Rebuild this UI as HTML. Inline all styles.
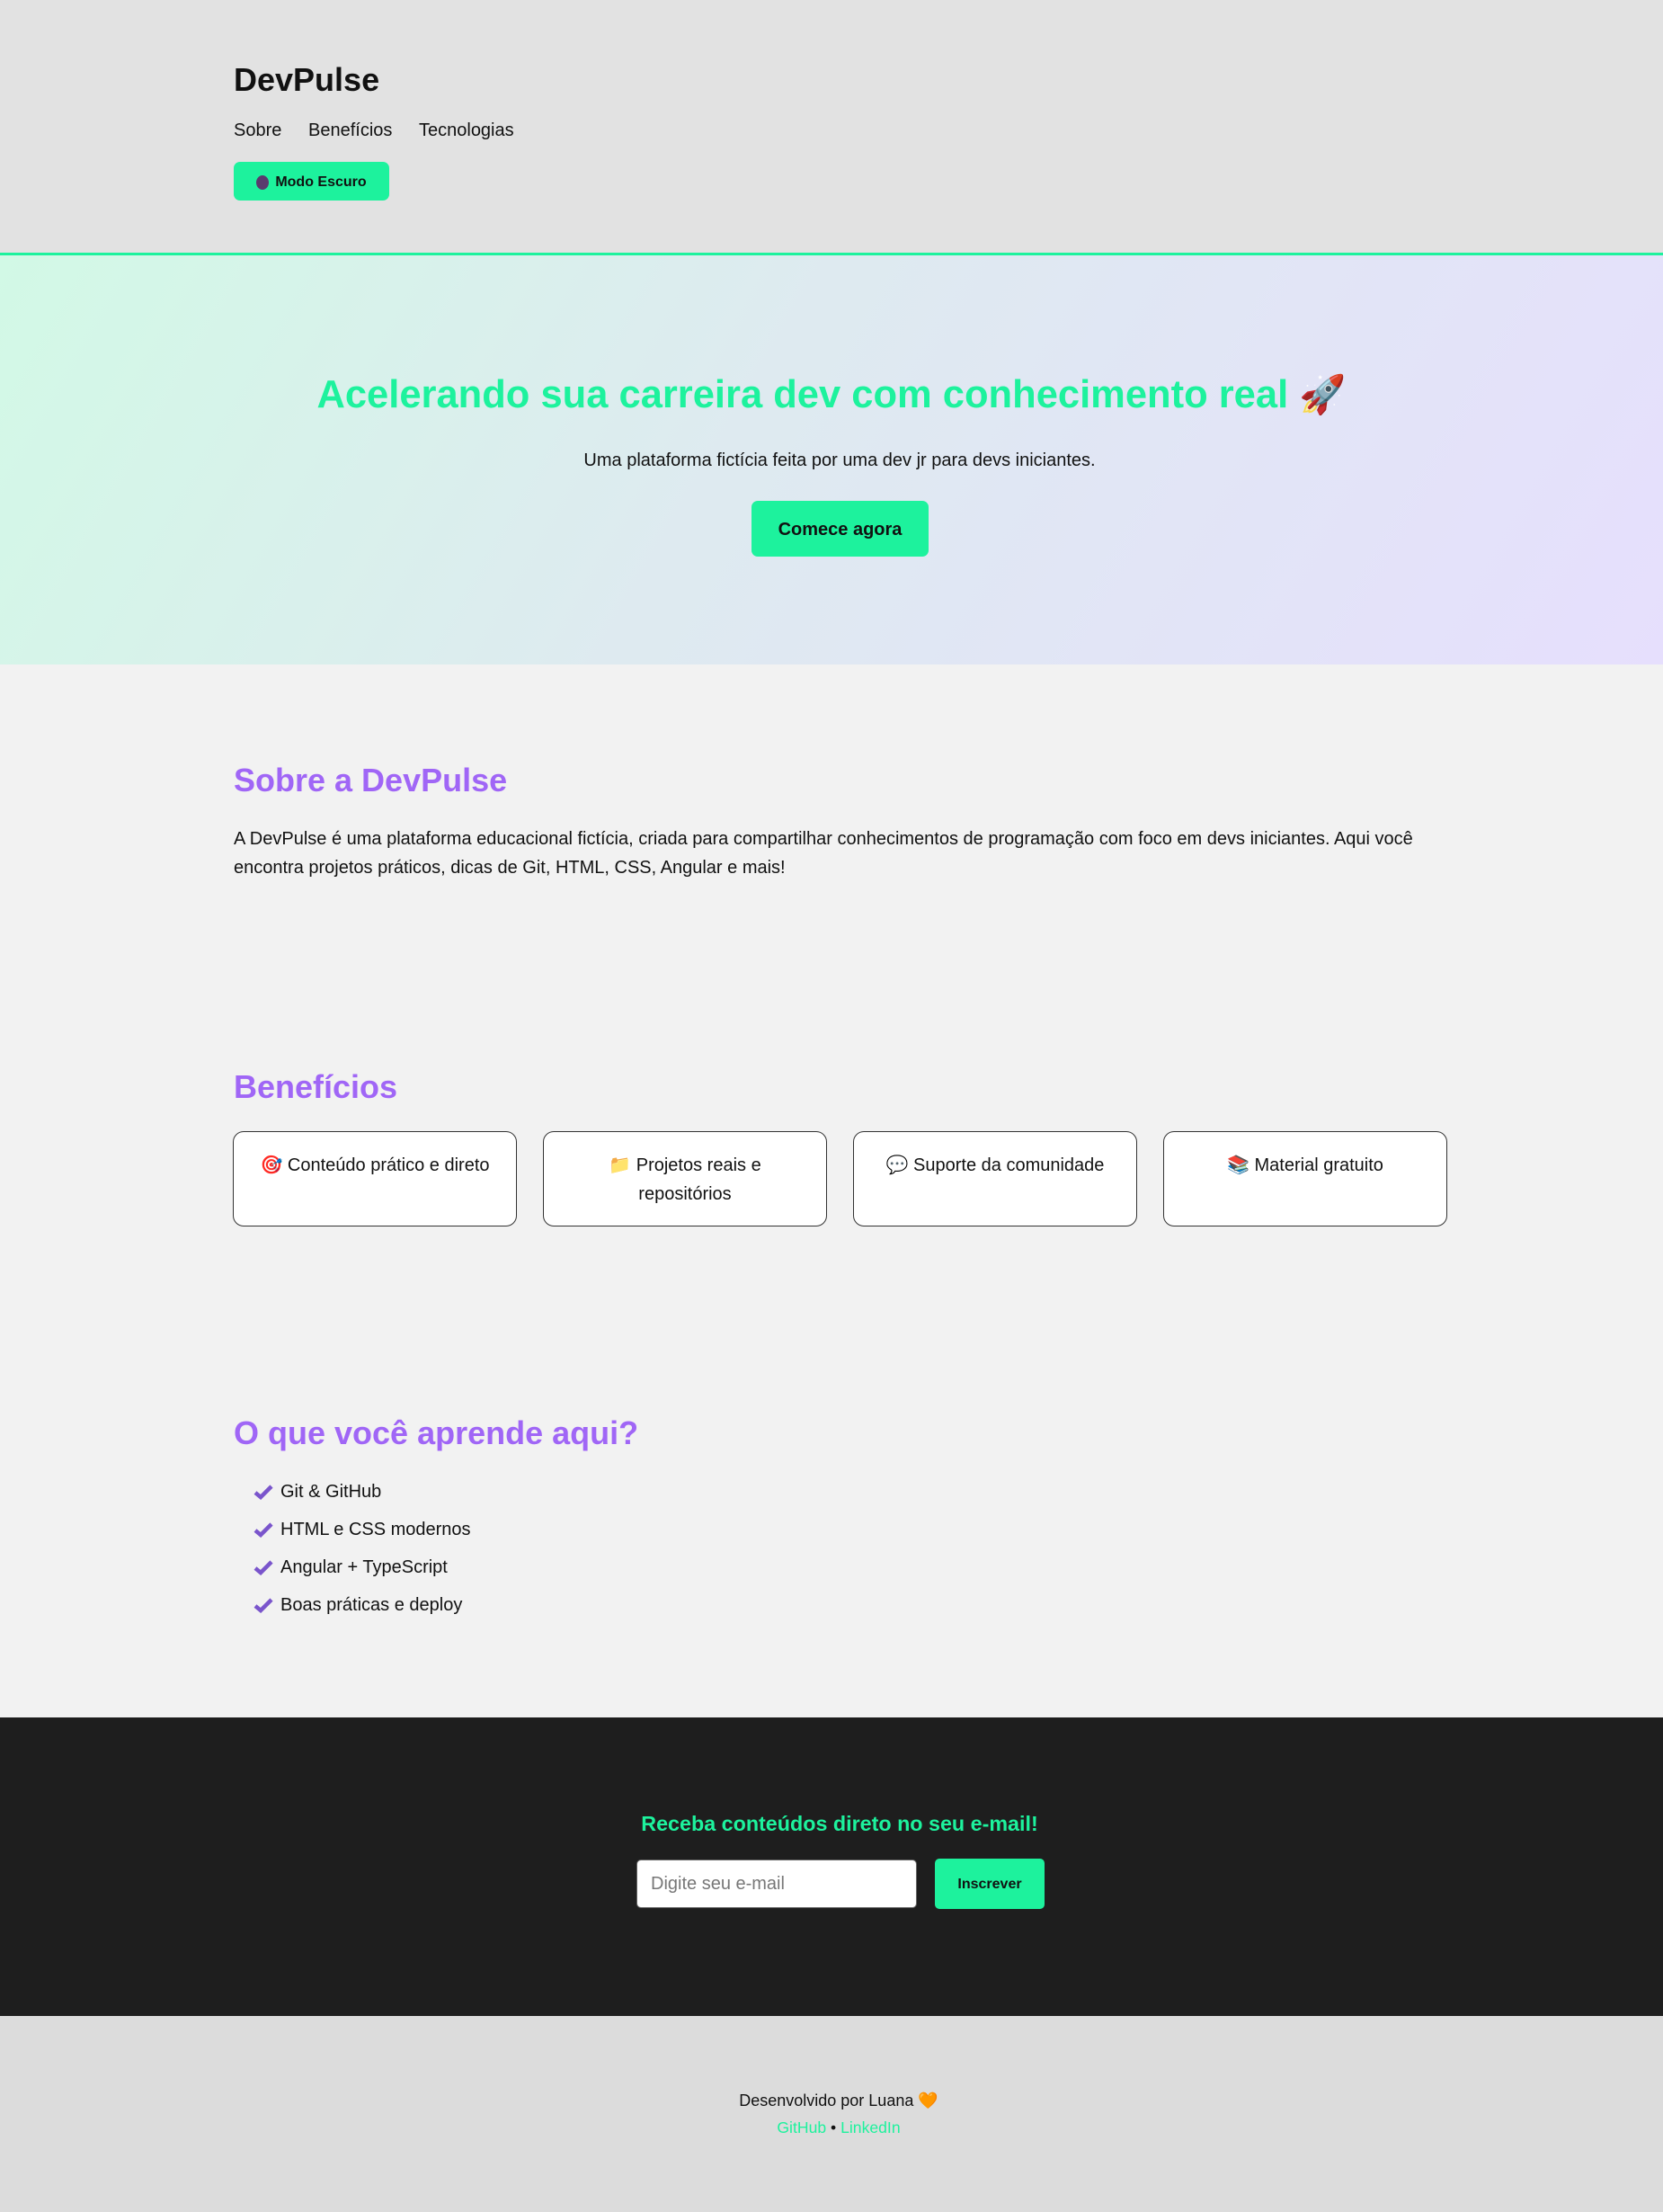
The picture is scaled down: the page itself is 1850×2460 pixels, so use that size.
<!DOCTYPE html>
<html><head><meta charset="utf-8"><style>
*{margin:0;padding:0;box-sizing:border-box}
body{width:1850px;height:2460px;position:relative;font-family:"Liberation Sans",Arial,sans-serif;background:#f2f2f2;color:#111;overflow:hidden}
.a{position:absolute;white-space:nowrap}
header{position:absolute;left:0;top:0;width:1850px;height:284px;background:#e2e2e2;border-bottom:3px solid #1df29d}
.hero{position:absolute;left:0;top:284px;width:1850px;height:455px;background:linear-gradient(120deg,#d2f9e6 0%,#deeaf0 45%,#e6dffd 100%)}
.btn{background:#1df29d;border-radius:7px;font-weight:bold;color:#111;display:flex;align-items:center;justify-content:center}
h2{position:absolute;left:260px;color:#a066f6;font-size:36px;font-weight:bold;white-space:nowrap}
.card{position:absolute;top:1258px;width:316px;height:106px;background:#fff;border:1.5px solid #333;border-radius:12px;text-align:center;font-size:20px;line-height:32px;padding:21px 20px 0}
.li{position:absolute;left:282px;font-size:20px}
.li svg{position:absolute;left:0;top:2px}
.li span{position:absolute;left:30px;top:0px;white-space:nowrap}
.dark{position:absolute;left:0;top:1910px;width:1850px;height:332px;background:#1e1e1e}
.foot{position:absolute;left:0;top:2242px;width:1850px;height:218px;background:#dcdcdc}
</style></head><body>
<header>
<div class="a" style="left:260px;top:68px;font-size:36px;font-weight:bold">DevPulse</div>
<div class="a" style="left:260px;top:134px;font-size:20px">Sobre</div>
<div class="a" style="left:343px;top:134px;font-size:20px">Benefícios</div>
<div class="a" style="left:466px;top:134px;font-size:20px">Tecnologias</div>
<div class="a btn" style="left:260px;top:180px;width:173px;height:43px;font-size:16px;padding-top:2px"><span style="display:inline-block;width:14px;height:16px;border-radius:50%;background:#5a3a6e;margin-right:7px"></span>Modo Escuro</div>
</header>
<div class="hero">
<div class="a" style="left:0;width:1850px;text-align:center;top:131px;font-size:43.5px;font-weight:bold;color:#1df29d">Acelerando sua carreira dev com conhecimento real <span style="font-size:42px">🚀</span></div>
<div class="a" style="left:9px;width:1850px;text-align:center;top:217px;font-size:20px">Uma plataforma fictícia feita por uma dev jr para devs iniciantes.</div>
<div class="a btn" style="left:836px;top:273px;width:197px;height:62px;font-size:20px;padding-top:2px">Comece agora</div>
</div>
<h2 style="top:847px">Sobre a DevPulse</h2>
<div class="a" style="left:260px;top:917px;width:1330px;white-space:normal;font-size:20px;line-height:32px">A DevPulse é uma plataforma educacional fictícia, criada para compartilhar conhecimentos de programação com foco em devs iniciantes. Aqui você encontra projetos práticos, dicas de Git, HTML, CSS, Angular e mais!</div>
<h2 style="top:1188px">Benefícios</h2>
<div class="card" style="left:259px">🎯 Conteúdo prático e direto</div>
<div class="card" style="left:604px">📁 Projetos reais e repositórios</div>
<div class="card" style="left:949px">💬 Suporte da comunidade</div>
<div class="card" style="left:1294px">📚 Material gratuito</div>
<h2 style="top:1573px">O que você aprende aqui?</h2>
<div class="li" style="top:1648px"><svg width="22" height="18" viewBox="0 0 22 18"><path d="M2 10 L8 15 L20 3" stroke="#7a55cc" stroke-width="4.5" fill="none"/></svg><span>Git &amp; GitHub</span></div>
<div class="li" style="top:1690px"><svg width="22" height="18" viewBox="0 0 22 18"><path d="M2 10 L8 15 L20 3" stroke="#7a55cc" stroke-width="4.5" fill="none"/></svg><span>HTML e CSS modernos</span></div>
<div class="li" style="top:1732px"><svg width="22" height="18" viewBox="0 0 22 18"><path d="M2 10 L8 15 L20 3" stroke="#7a55cc" stroke-width="4.5" fill="none"/></svg><span>Angular + TypeScript</span></div>
<div class="li" style="top:1774px"><svg width="22" height="18" viewBox="0 0 22 18"><path d="M2 10 L8 15 L20 3" stroke="#7a55cc" stroke-width="4.5" fill="none"/></svg><span>Boas práticas e deploy</span></div>
<div class="dark">
<div class="a" style="left:9px;width:1850px;text-align:center;top:105px;font-size:23.3px;font-weight:bold;color:#1df29d">Receba conteúdos direto no seu e-mail!</div>
<div class="a" style="left:708px;top:158px;width:312px;height:54px;background:#fff;border:1.5px solid #666;border-radius:5px;font-size:20px;color:#777;padding:15px 15px">Digite seu e-mail</div>
<div class="a btn" style="left:1040px;top:157px;width:122px;height:56px;font-size:16px;border-radius:5px;padding-top:2px">Inscrever</div>
</div>
<div class="foot">
<div class="a" style="left:8px;width:1850px;text-align:center;top:84px;font-size:18px">Desenvolvido por Luana 🧡</div>
<div class="a" style="left:8px;width:1850px;text-align:center;top:114px;font-size:17.6px;color:#1df29d">GitHub <span style="color:#111">•</span> LinkedIn</div>
</div>
</body></html>
